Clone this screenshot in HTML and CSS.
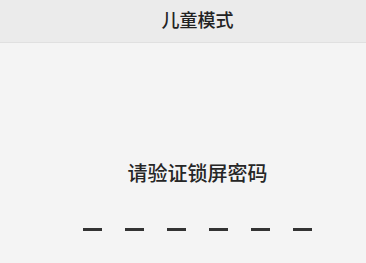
FILE: index.html
```html
<!DOCTYPE html>
<html lang="zh">
<head>
<meta charset="utf-8">
<title>儿童模式</title>
<link rel="stylesheet" href="styles.css">
</head>
<body>
<div class="screen">
  <header class="bar">
    <h1 class="title">儿童模式</h1>
  </header>
  <main class="content">
    <p class="prompt">请验证锁屏密码</p>
    <div class="pin">
      <span class="slot"></span>
      <span class="slot"></span>
      <span class="slot"></span>
      <span class="slot"></span>
      <span class="slot"></span>
      <span class="slot"></span>
    </div>
  </main>
</div>
</body>
</html>
```
FILE: styles.css
```css
html, body {
  margin: 0;
  padding: 0;
  background: #f4f4f4;
  overflow: hidden;
}
body {
  font-family: "Noto Sans CJK SC", "Noto Sans", sans-serif;
  color: #222;
}
.screen {
  width: 366px;
  height: 263px;
  display: flex;
  flex-direction: column;
  background: #f4f4f4;
}
.bar {
  height: 43px;
  background: #ebebeb;
  border-bottom: 1px solid #e0e0e0;
  display: flex;
  justify-content: center;
  box-sizing: border-box;
  padding-left: 29px;
}
.title {
  margin: 0;
  font-size: 18px;
  font-weight: 500;
  line-height: 38px;
  color: #222;
}
.content {
  display: flex;
  flex-direction: column;
  align-items: center;
  padding-top: 116px;
  padding-left: 29px;
}
.prompt {
  margin: 0;
  font-size: 20px;
  font-weight: 500;
  line-height: 28px;
  color: #262626;
}
.pin {
  display: flex;
  gap: 23px;
  margin-top: 41px;
}
.slot {
  display: block;
  width: 19px;
  height: 3px;
  background: #333;
}
```
